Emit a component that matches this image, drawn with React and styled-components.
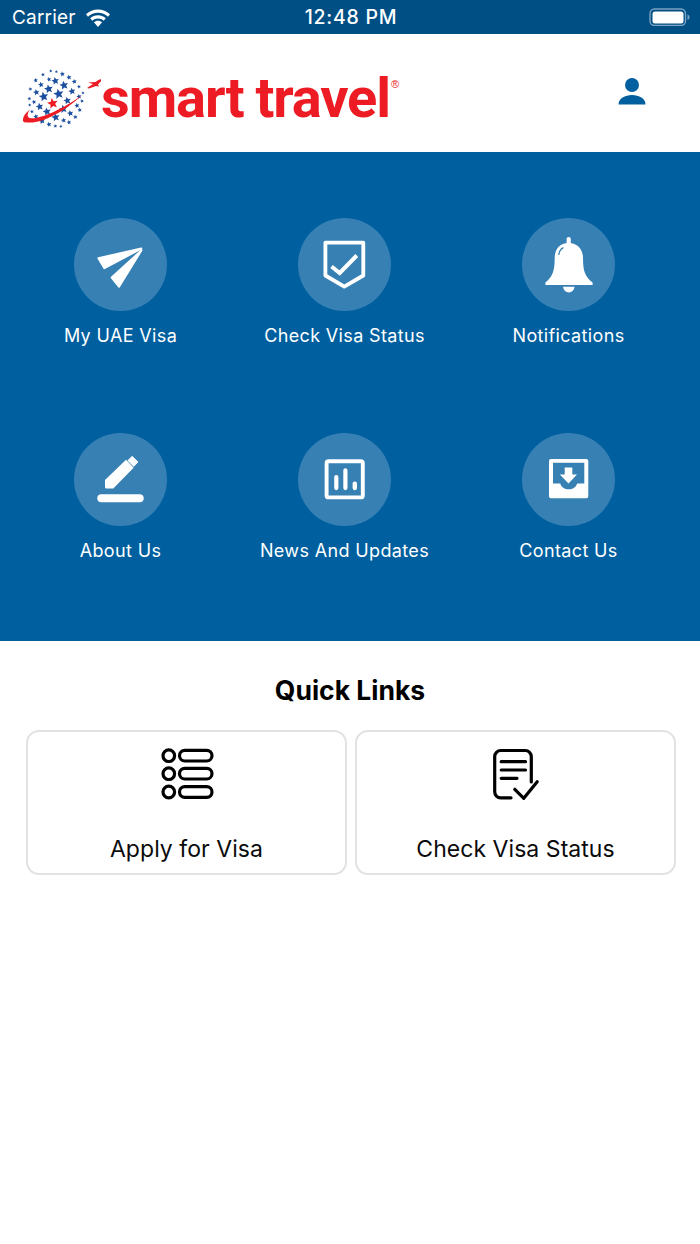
import React from "react";
import styled, { createGlobalStyle } from "styled-components";

const Global = createGlobalStyle`
  html, body { margin: 0; padding: 0; background: #fff; }
  body { font-family: Inter, "Liberation Sans", sans-serif; }
`;

const Page = styled.div`
  width: 700px;
  height: 1244px;
  background: #fff;
  display: flex;
  flex-direction: column;
  overflow: hidden;
`;

const StatusBar = styled.div`
  height: 34px;
  background: #004f84;
  color: #fff;
  display: grid;
  grid-template-columns: 1fr auto 1fr;
  align-items: center;
  padding: 0 10px 0 12px;
  font-size: 19px;
`;
const StatusLeft = styled.div`
  display: flex;
  align-items: center;
  gap: 9px;
  letter-spacing: 0.2px;
`;
const Clock = styled.div`
  font-size: 19.5px;
  font-weight: 500;
  letter-spacing: 0.75px;
`;
const StatusRight = styled.div`
  display: flex;
  justify-content: flex-end;
`;

const Header = styled.header`
  height: 118px;
  display: flex;
  align-items: flex-start;
  justify-content: space-between;
  padding: 0 54px 0 20px;
`;
const Logo = styled.div`
  display: flex;
  align-items: flex-start;
  padding-top: 31px;
`;
const LogoMark = styled.svg`
  width: 81px;
  height: 65px;
  display: block;
`;
const LogoText = styled.span`
  display: block;
  color: #ed1c24;
  font-family: Roboto, sans-serif;
  font-weight: 700;
  font-size: 56px;
  line-height: 66px;
  letter-spacing: -1.1px;
  word-spacing: -1px;
  white-space: nowrap;
`;
const LogoReg = styled.span`
  color: #ed1c24;
  font-size: 11px;
  line-height: 12px;
  margin: 13px 0 0 1px;
  font-family: "Liberation Sans", sans-serif;
`;
const UserButton = styled.svg`
  width: 28px;
  height: 32px;
  margin-top: 41px;
  display: block;
`;

const Hero = styled.section`
  height: 489px;
  box-sizing: border-box;
  background: #005f9f;
  padding: 66px 0 0 8.5px;
  display: grid;
  grid-template-columns: repeat(3, 224px);
  grid-auto-rows: 129px;
  row-gap: 86px;
`;
const Tile = styled.div`
  display: flex;
  flex-direction: column;
  align-items: center;
`;
const Disc = styled.div`
  width: 93px;
  height: 93px;
  border-radius: 50%;
  background: #3780b4;
  margin-bottom: 14px;
`;
const DiscIcon = styled.svg`
  width: 93px;
  height: 93px;
  display: block;
`;
const TileLabel = styled.div`
  color: #fff;
  font-size: 18px;
  line-height: 22px;
  letter-spacing: 0.36px;
`;

const Quick = styled.section`
  padding: 0 24px 0 26px;
`;
const QuickTitle = styled.h2`
  margin: 0 0 0 -2px;
  height: 89px;
  box-sizing: border-box;
  padding-top: 32px;
  font-size: 26.5px;
  line-height: 34px;
  font-weight: 700;
  text-align: center;
  color: #000;
`;
const QuickGrid = styled.div`
  display: grid;
  grid-template-columns: 321px 321px;
  column-gap: 8px;
`;
const QuickCard = styled.div`
  height: 145px;
  box-sizing: border-box;
  border: 2px solid #e2e2e2;
  border-radius: 13px;
  display: flex;
  flex-direction: column;
  align-items: center;
  padding-top: 14px;
  background: #fff;
`;
const QuickIcon = styled.svg`
  width: 56px;
  height: 56px;
  display: block;
  fill: none;
  stroke: #000;
  stroke-width: 3.2;
  stroke-linecap: round;
  stroke-linejoin: round;
`;
const QuickLabel = styled.div`
  margin-top: 32px;
  font-size: 23px;
  line-height: 30px;
  letter-spacing: 0.05px;
  color: #0b0b0b;
`;

const starPts = (cx, cy, r) => {
  const p = [];
  for (let i = 0; i < 10; i++) {
    const a = -Math.PI / 2 + (i * Math.PI) / 5 - 0.2;
    const rr = i % 2 ? r * 0.45 : r;
    p.push(`${(cx + rr * Math.cos(a)).toFixed(2)},${(cy + rr * Math.sin(a)).toFixed(2)}`);
  }
  return p.join(" ");
};

const STARS = [
  [107,33,3],[124,35,3],[84,44,4],[142,42,6],[162,52,6],[62,61,5],[102,58,5],[121,63,10],[178,65,6],
  [78,74,7],[147,76,12],[192,80,4],[46,87,4],[101,87,12],[171,94,9],[64,97,8],[131,102,14],[204,99,3],
  [86,110,13],[192,110,6],[43,116,4],[57,126,5],[157,122,10],[201,123,4],[74,140,10],[186,137,6],
  [44,135,3],[96,155,11],[145,147,11],[51,155,4],[166,160,8],[194,150,5],[122,172,11],[63,170,6],
  [181,171,5],[146,181,6],[81,183,8],[162,187,5],[102,193,6],[121,198,4],[138,199,3],
];

const Emblem = () => (
  <LogoMark viewBox="20 65 81 65">
    {STARS.map(([x, y, r], i) => (
      <polygon key={i} fill="#1c4f9f" points={starPts(15 + x / 3, 60 + y / 3, r / 3 + 0.7)} />
    ))}
    <polygon fill="#ed1c24" points={starPts(52.7, 103.5, 5.6)} />
    <path fill="#ed1c24" d="M23 121 C22.5 116.5 26 112.5 30 109.5 C27.5 113 26.5 116.5 29.5 118 C37 120.5 62 110 82 95 C64 112.5 42 122.5 31 122.5 C26 122.5 23.5 122.5 23 121Z" />
    <path fill="#ed1c24" d="M103 78.5 C100 79 97.5 80.5 95.5 82 L88 82.5 L93 84 L87 88 L89 88.5 L96 86 L99 86.5 L98 84.5 C100 82.5 102 80.5 103 78.5Z" />
  </LogoMark>
);

const Wifi = () => (
  <svg width="26" height="19" viewBox="0 0 26 19" fill="#fff">
    <path d="M13 1.5C8.5 1.5 4.3 3.3 1 6.3L3 8.8C5.7 6.3 9.2 4.8 13 4.8s7.3 1.5 10 4l2-2.5C21.7 3.3 17.5 1.5 13 1.5z" />
    <path d="M13 7.2c-3 0-5.7 1.1-7.8 3l2.1 2.5c1.5-1.3 3.5-2.2 5.7-2.2s4.2.9 5.7 2.2l2.1-2.5c-2.1-1.9-4.8-3-7.8-3z" />
    <path d="M13 12.8c-1.6 0-3 .6-4.1 1.5L13 19l4.1-4.7C16 13.4 14.6 12.8 13 12.8z" />
  </svg>
);

const Battery = () => (
  <svg width="41" height="18" viewBox="0 0 41 18">
    <rect x="1" y="1" width="35.5" height="16.5" rx="4.5" fill="none" stroke="#7aa3c1" strokeWidth="1.4" />
    <rect x="3.5" y="3.5" width="31" height="12" rx="2.5" fill="#fff" />
    <path d="M38.5 6.5c1.4.4 2 1.4 2 2.7s-.6 2.3-2 2.7z" fill="#7aa3c1" />
  </svg>
);

const PlaneIcon = () => (
  <DiscIcon viewBox="0 0 93 93" fill="#fff" stroke="#fff" strokeWidth="2" strokeLinejoin="round">
    <path d="M67.3 30.5 24.4 40.2 30.4 50.2 62 33.4Z" />
    <path d="M67.5 32.2 45 68.6 37.7 59.6 64 35.6Z" />
  </DiscIcon>
);

const ShieldIcon = () => (
  <DiscIcon viewBox="0 0 93 93" fill="none" stroke="#fff" strokeLinejoin="round">
    <path d="M27.4 24.6H65.3V57.5L46.3 68.6 27.4 57.5Z" strokeWidth="3.8" />
    <path d="M33.5 48.5 41.7 55 58.8 37.5" strokeWidth="4" strokeLinejoin="miter" />
  </DiscIcon>
);

const BellIcon = () => (
  <DiscIcon viewBox="0 0 93 93" fill="#fff">
    <rect x="44.6" y="19" width="4.2" height="9" rx="2.1" />
    <path d="M46.7 25C37 25 32.7 32 32.7 40 32.7 52 31 58.5 23.4 64.5V67H70.6V64.5C62.5 58.5 61 52 61 40 61 32 56 25 46.7 25Z" />
    <path d="M41 68.8H52.6C52 72.4 49.6 74.4 46.8 74.4S41.6 72.4 41 68.8Z" />
    <path d="M36.8 37C37 33.5 38.6 31 41.4 29.6" fill="none" stroke="#3780b4" strokeWidth="1.2" />
  </DiscIcon>
);

const PencilIcon = () => (
  <DiscIcon viewBox="0 0 93 93" fill="#fff">
    <rect x="23.3" y="61.3" width="46.4" height="8" rx="4" />
    <path d="M31 47 52 26.8 59.6 34.7 39.3 55.4H32.5A1.5 1.5 0 0 1 31 53.9Z" />
    <path d="M58.2 23.2 64 29 59.8 33.4 53.9 27.6Z" stroke="#fff" strokeWidth="0.8" strokeLinejoin="round" />
  </DiscIcon>
);

const ChartIcon = () => (
  <DiscIcon viewBox="0 0 93 93" fill="#fff">
    <rect x="28.6" y="28.2" width="36.2" height="36.2" rx="2" fill="none" stroke="#fff" strokeWidth="3.9" />
    <rect x="36.2" y="42" width="4.2" height="15.2" rx="2.1" />
    <rect x="45.3" y="35.3" width="4.2" height="21.9" rx="2.1" />
    <rect x="54.6" y="48.5" width="4.4" height="8.7" rx="2.1" />
  </DiscIcon>
);

const InboxIcon = () => (
  <DiscIcon viewBox="0 0 93 93" fill="#fff">
    <path
      fillRule="evenodd"
      d="M29 26H64.3A2 2 0 0 1 66.3 28V63.3A2 2 0 0 1 64.3 65.3H29A2 2 0 0 1 27 63.3V28A2 2 0 0 1 29 26ZM31 29.8V50.4H38.2C39.4 54 42.6 56.2 46.7 56.2S54 54 55.2 50.4H62.3V29.8Z"
    />
    <path d="M42.7 34.6H50.3V41.4H55L46.5 50.6 37.8 41.4H42.7Z" />
  </DiscIcon>
);

const TILES = [
  ["My UAE Visa", PlaneIcon],
  ["Check Visa Status", ShieldIcon],
  ["Notifications", BellIcon],
  ["About Us", PencilIcon],
  ["News And Updates", ChartIcon],
  ["Contact Us", InboxIcon],
];

export default function App() {
  return (
    <Page>
      <Global />
      <StatusBar>
        <StatusLeft>
          Carrier
          <Wifi />
        </StatusLeft>
        <Clock>12:48 PM</Clock>
        <StatusRight>
          <Battery />
        </StatusRight>
      </StatusBar>

      <Header>
        <Logo>
          <Emblem />
          <LogoText>smart travel</LogoText>
          <LogoReg>®</LogoReg>
        </Logo>
        <UserButton viewBox="0 0 28 32" fill="#005f9f">
          <circle cx="14" cy="10" r="7" />
          <path d="M0.5 29.5C0.5 23.5 7 20 14 20S27.5 23.5 27.5 29.5Z" />
        </UserButton>
      </Header>

      <Hero>
        {TILES.map(([label, Icon]) => (
          <Tile key={label}>
            <Disc>
              <Icon />
            </Disc>
            <TileLabel>{label}</TileLabel>
          </Tile>
        ))}
      </Hero>

      <Quick>
        <QuickTitle>Quick Links</QuickTitle>
        <QuickGrid>
          <QuickCard>
            <QuickIcon viewBox="0 0 56 56">
              <circle cx="9.8" cy="9.7" r="5.8" />
              <circle cx="9.8" cy="27.7" r="5.8" />
              <circle cx="9.8" cy="46" r="5.8" />
              <rect x="20.5" y="4.4" width="32.5" height="10.6" rx="5.3" />
              <rect x="20.5" y="22.4" width="32.5" height="10.6" rx="5.3" />
              <rect x="20.5" y="40.7" width="32.5" height="10.6" rx="5.3" />
            </QuickIcon>
            <QuickLabel>Apply for Visa</QuickLabel>
          </QuickCard>
          <QuickCard>
            <QuickIcon viewBox="0 0 56 56">
              <path d="M43.3 36V10.5A6 6 0 0 0 37.3 4.5H12.7A6 6 0 0 0 6.7 10.5V45.8A6 6 0 0 0 12.7 51.8H23" />
              <path d="M13.2 15.7H37.5M13.2 24H37.5M13.2 32.3H29" />
              <path d="M26.8 43.3 35.8 52.3 49.2 35.7" />
            </QuickIcon>
            <QuickLabel>Check Visa Status</QuickLabel>
          </QuickCard>
        </QuickGrid>
      </Quick>
    </Page>
  );
}
